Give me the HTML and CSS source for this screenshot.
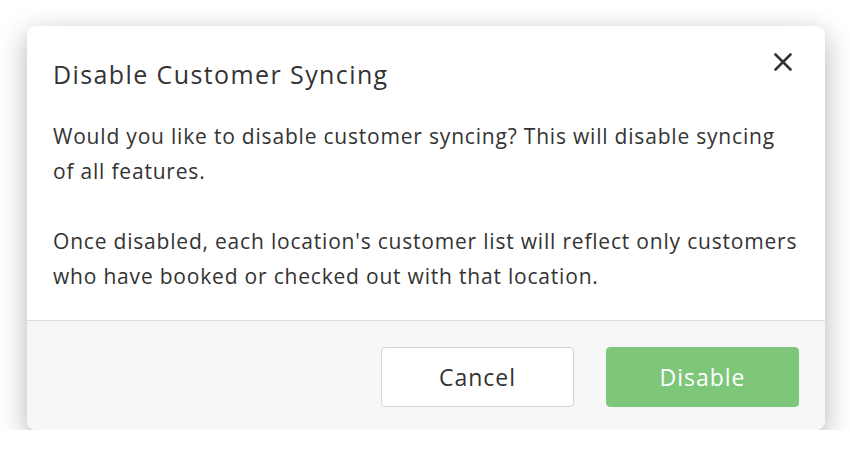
FILE: index.html
```html
<!DOCTYPE html>
<html lang="en">
<head>
  <meta charset="UTF-8">
  <title>Disable Customer Syncing</title>
  <link rel="stylesheet" href="styles.css">
</head>
<body>

<div class="modal">
  <div class="modal-body">
    <div class="modal-head">
      <h2>Disable Customer Syncing</h2>
      <button class="close" aria-label="Close">
        <svg width="20" height="20" viewBox="0 0 20 20">
          <path d="M2.5 2.5 L17.5 17.5 M17.5 2.5 L2.5 17.5" stroke="#333" stroke-width="2.6" stroke-linecap="round"/>
        </svg>
      </button>
    </div>
    <p>Would you like to disable customer syncing? This will disable syncing of all features.</p>
    <p>Once disabled, each location's customer list will reflect only customers who have booked or checked out with that location.</p>
  </div>
  <div class="modal-foot">
    <button class="btn btn-cancel">Cancel</button>
    <button class="btn btn-disable">Disable</button>
  </div>
</div>

</body>
</html>
```
FILE: styles.css
```css
body {
  margin: 0;
  background-color: #ffffff;
  font-family: "Open Sans", sans-serif;
  color: #333333;
}
.modal {
  width: 798px;
  margin: 26px 0 0 27px;
  background-color: #ffffff;
  border-radius: 9px;
  box-shadow: 0 8px 28px rgba(0,0,0,0.3);
  overflow: hidden;
}
.modal-body {
  padding: 22px 26px 26px 26px;
  border-bottom: 1px solid #dcdcdc;
}
.modal-head {
  display: flex;
  justify-content: space-between;
  align-items: flex-start;
  margin-bottom: 30px;
}
h2 {
  margin: 11px 0 0 0;
  font-size: 25px;
  line-height: 30px;
  letter-spacing: 1.4px;
  font-weight: 400;
  color: #333333;
}
.close {
  background: none;
  border: none;
  padding: 0;
  margin: 0 2px 0 0;
  width: 28px;
  height: 28px;
  display: flex;
  align-items: center;
  justify-content: center;
}
p {
  margin: 0 0 35px 0;
  font-size: 21px;
  line-height: 35px;
  letter-spacing: 0.8px;
}
p:last-child {
  margin-bottom: 0;
}
.modal-foot {
  background-color: #f7f7f7;
  display: flex;
  justify-content: flex-end;
  gap: 32px;
  padding: 26px 26px 23px 26px;
}
.btn {
  width: 193px;
  height: 60px;
  border-radius: 4px;
  font-family: "Open Sans", sans-serif;
  font-size: 23px;
  letter-spacing: 1px;
}
.btn-cancel {
  background-color: #ffffff;
  border: 1px solid #d4d4d4;
  color: #333333;
}
.btn-disable {
  background-color: #7dc67a;
  border: 1px solid #7dc67a;
  color: #ffffff;
}
```
